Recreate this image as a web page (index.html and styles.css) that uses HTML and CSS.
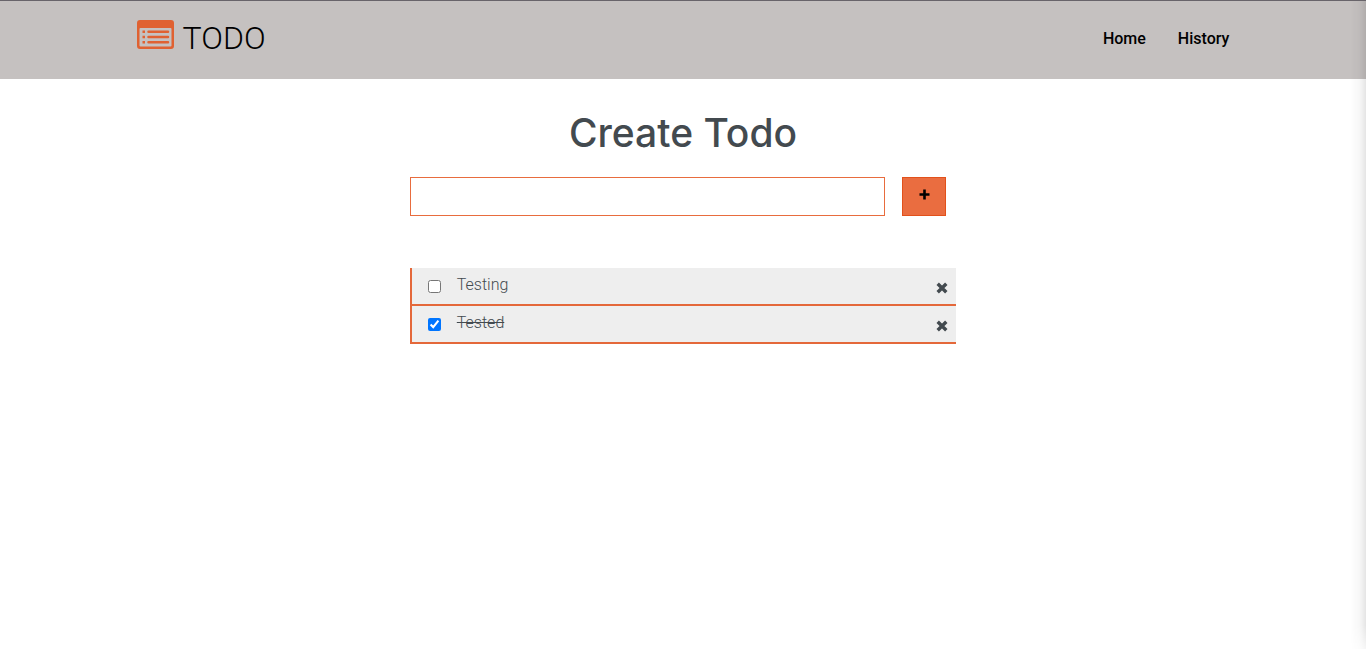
FILE: index.html
```html
<!DOCTYPE html>
<html lang="en">
<head>
<meta charset="utf-8">
<meta name="viewport" content="width=device-width, initial-scale=1">
<title>Todo</title>
<link rel="stylesheet" href="styles.css">
</head>
<body>
<header class="site-header">
  <div class="header-inner">
    <a class="brand" href="#">
      <svg class="brand-icon" viewBox="0 0 38 29" aria-hidden="true">
        <path fill="#e06131" fill-rule="evenodd" d="M3 0H34A3 3 0 0 1 37 3V26A3 3 0 0 1 34 29H3A3 3 0 0 1 0 26V3A3 3 0 0 1 3 0ZM3.500 8Q2.500 8 2.500 9V25.500Q2.500 26.500 3.500 26.500H33.500Q34.500 26.500 34.500 25.500V9Q34.500 8 33.500 8Z"/>
        <path fill="#e06131" d="M5.500 10.500h2.500v2.500h-2.500zM5.500 15.800h2.500v2.500h-2.500zM5.500 21h2.500v2.500h-2.500z"/>
        <path stroke="#e06131" stroke-width="2.500" stroke-linecap="round" d="M11.500 11.800H31M11.500 17H31M11.500 22.200H31"/>
      </svg>
      <span class="brand-name">TODO</span>
    </a>
    <nav class="nav">
      <a class="nav-link" href="#">Home</a>
      <a class="nav-link" href="#history">History</a>
    </nav>
  </div>
</header>
<main class="main">
  <h1 class="title">Create Todo</h1>
  <form class="todo-form">
    <input class="todo-input" type="text" aria-label="New todo">
    <button class="add-button" type="button" aria-label="Add todo">
      <svg class="add-icon" viewBox="0 0 11 11" aria-hidden="true"><path stroke="#000" stroke-width="2.600" d="M5.500 .5V10.500M.5 5.500H10.500"/></svg>
    </button>
  </form>
  <ul class="todo-list">
    <li class="todo-item">
      <input class="todo-check" type="checkbox" id="todo-1">
      <label class="todo-label" for="todo-1">Testing</label>
      <button class="remove-button" type="button" aria-label="Remove Testing">
        <svg class="remove-icon" viewBox="0 0 12 12" aria-hidden="true"><path stroke="#434a4f" stroke-width="3.400" d="M1.700 1.700L10.300 10.300M10.300 1.700L1.700 10.300"/></svg>
      </button>
    </li>
    <li class="todo-item">
      <input class="todo-check" type="checkbox" id="todo-2" checked>
      <label class="todo-label" for="todo-2">Tested</label>
      <button class="remove-button" type="button" aria-label="Remove Tested">
        <svg class="remove-icon" viewBox="0 0 12 12" aria-hidden="true"><path stroke="#434a4f" stroke-width="3.400" d="M1.700 1.700L10.300 10.300M10.300 1.700L1.700 10.300"/></svg>
      </button>
    </li>
  </ul>
</main>
<div class="edge-shade"></div>
</body>
</html>
```
FILE: styles.css
```css
* {
  box-sizing: border-box;
}

body {
  margin: 0;
  background: #fff;
  color: #434a4f;
  font-family: Roboto, "Noto Sans", sans-serif;
  font-size: 16px;
}

.site-header {
  background: #c5c1c0;
  border-top: 1px solid #68646a;
}

.header-inner {
  display: flex;
  align-items: center;
  justify-content: space-between;
  width: 80%;
  margin: 0 auto;
  padding: 18px 0 22px;
}

.brand {
  display: flex;
  gap: 8px;
  color: #000;
  text-decoration: none;
}

.brand-icon {
  width: 38px;
  height: 29px;
  margin-top: 1px;
}

.brand-name {
  font-size: 32px;
  font-weight: 300;
  line-height: 38px;
}

.nav {
  display: flex;
  gap: 32px;
  padding-top: 2px;
}

.nav-link {
  color: #000;
  font-weight: 500;
  line-height: 20px;
  text-decoration: none;
}

.main {
  width: 40%;
  margin: 0 auto;
  padding-top: 30px;
}

.title {
  margin: 0 0 20px;
  font-family: Inter, "Noto Sans", sans-serif;
  font-size: 39px;
  font-weight: 500;
  line-height: 48px;
  text-align: center;
  white-space: nowrap;
}

.todo-form {
  display: flex;
  gap: 17px;
  margin-bottom: 52px;
  padding-right: 10px;
}

.todo-input {
  flex: 1;
  min-width: 0;
  height: 39px;
  padding: 0 10px;
  border: 1px solid #e86c3e;
  background: #fff;
  color: inherit;
  font: inherit;
}

.add-button {
  display: flex;
  align-items: center;
  justify-content: center;
  width: 44px;
  padding: 0 0 4px;
  border: 1px solid #e2511b;
  background: #ea6d40;
}

.add-icon {
  width: 11px;
  height: 11px;
}

.todo-list {
  margin: 0;
  padding: 0;
  list-style: none;
}

.todo-item {
  display: flex;
  align-items: center;
  padding: 8px 8px 8px 16px;
  border-bottom: 2px solid #e4683a;
  border-left: 2px solid #e4683a;
  background: #eee;
}

.todo-check {
  width: 13px;
  height: 13px;
  margin: 0 16px 0 0;
}

.todo-label {
  flex: 1;
  padding-bottom: 2px;
  font-weight: 300;
  line-height: 18px;
}

.todo-check:checked + .todo-label {
  text-decoration: line-through;
}

.remove-button {
  display: flex;
  padding: 3px 0 0;
  border: 0;
  background: none;
}

.remove-icon {
  width: 12px;
  height: 12px;
}

.edge-shade {
  position: fixed;
  top: 1px;
  right: 0;
  bottom: 0;
  width: 16px;
  background: linear-gradient(to right, transparent, rgb(0 0 0 / 3%) 60%, rgb(0 0 0 / 10%));
  mask-image: linear-gradient(to top, rgb(0 0 0 / 35%), #000 24px);
  pointer-events: none;
}
```
